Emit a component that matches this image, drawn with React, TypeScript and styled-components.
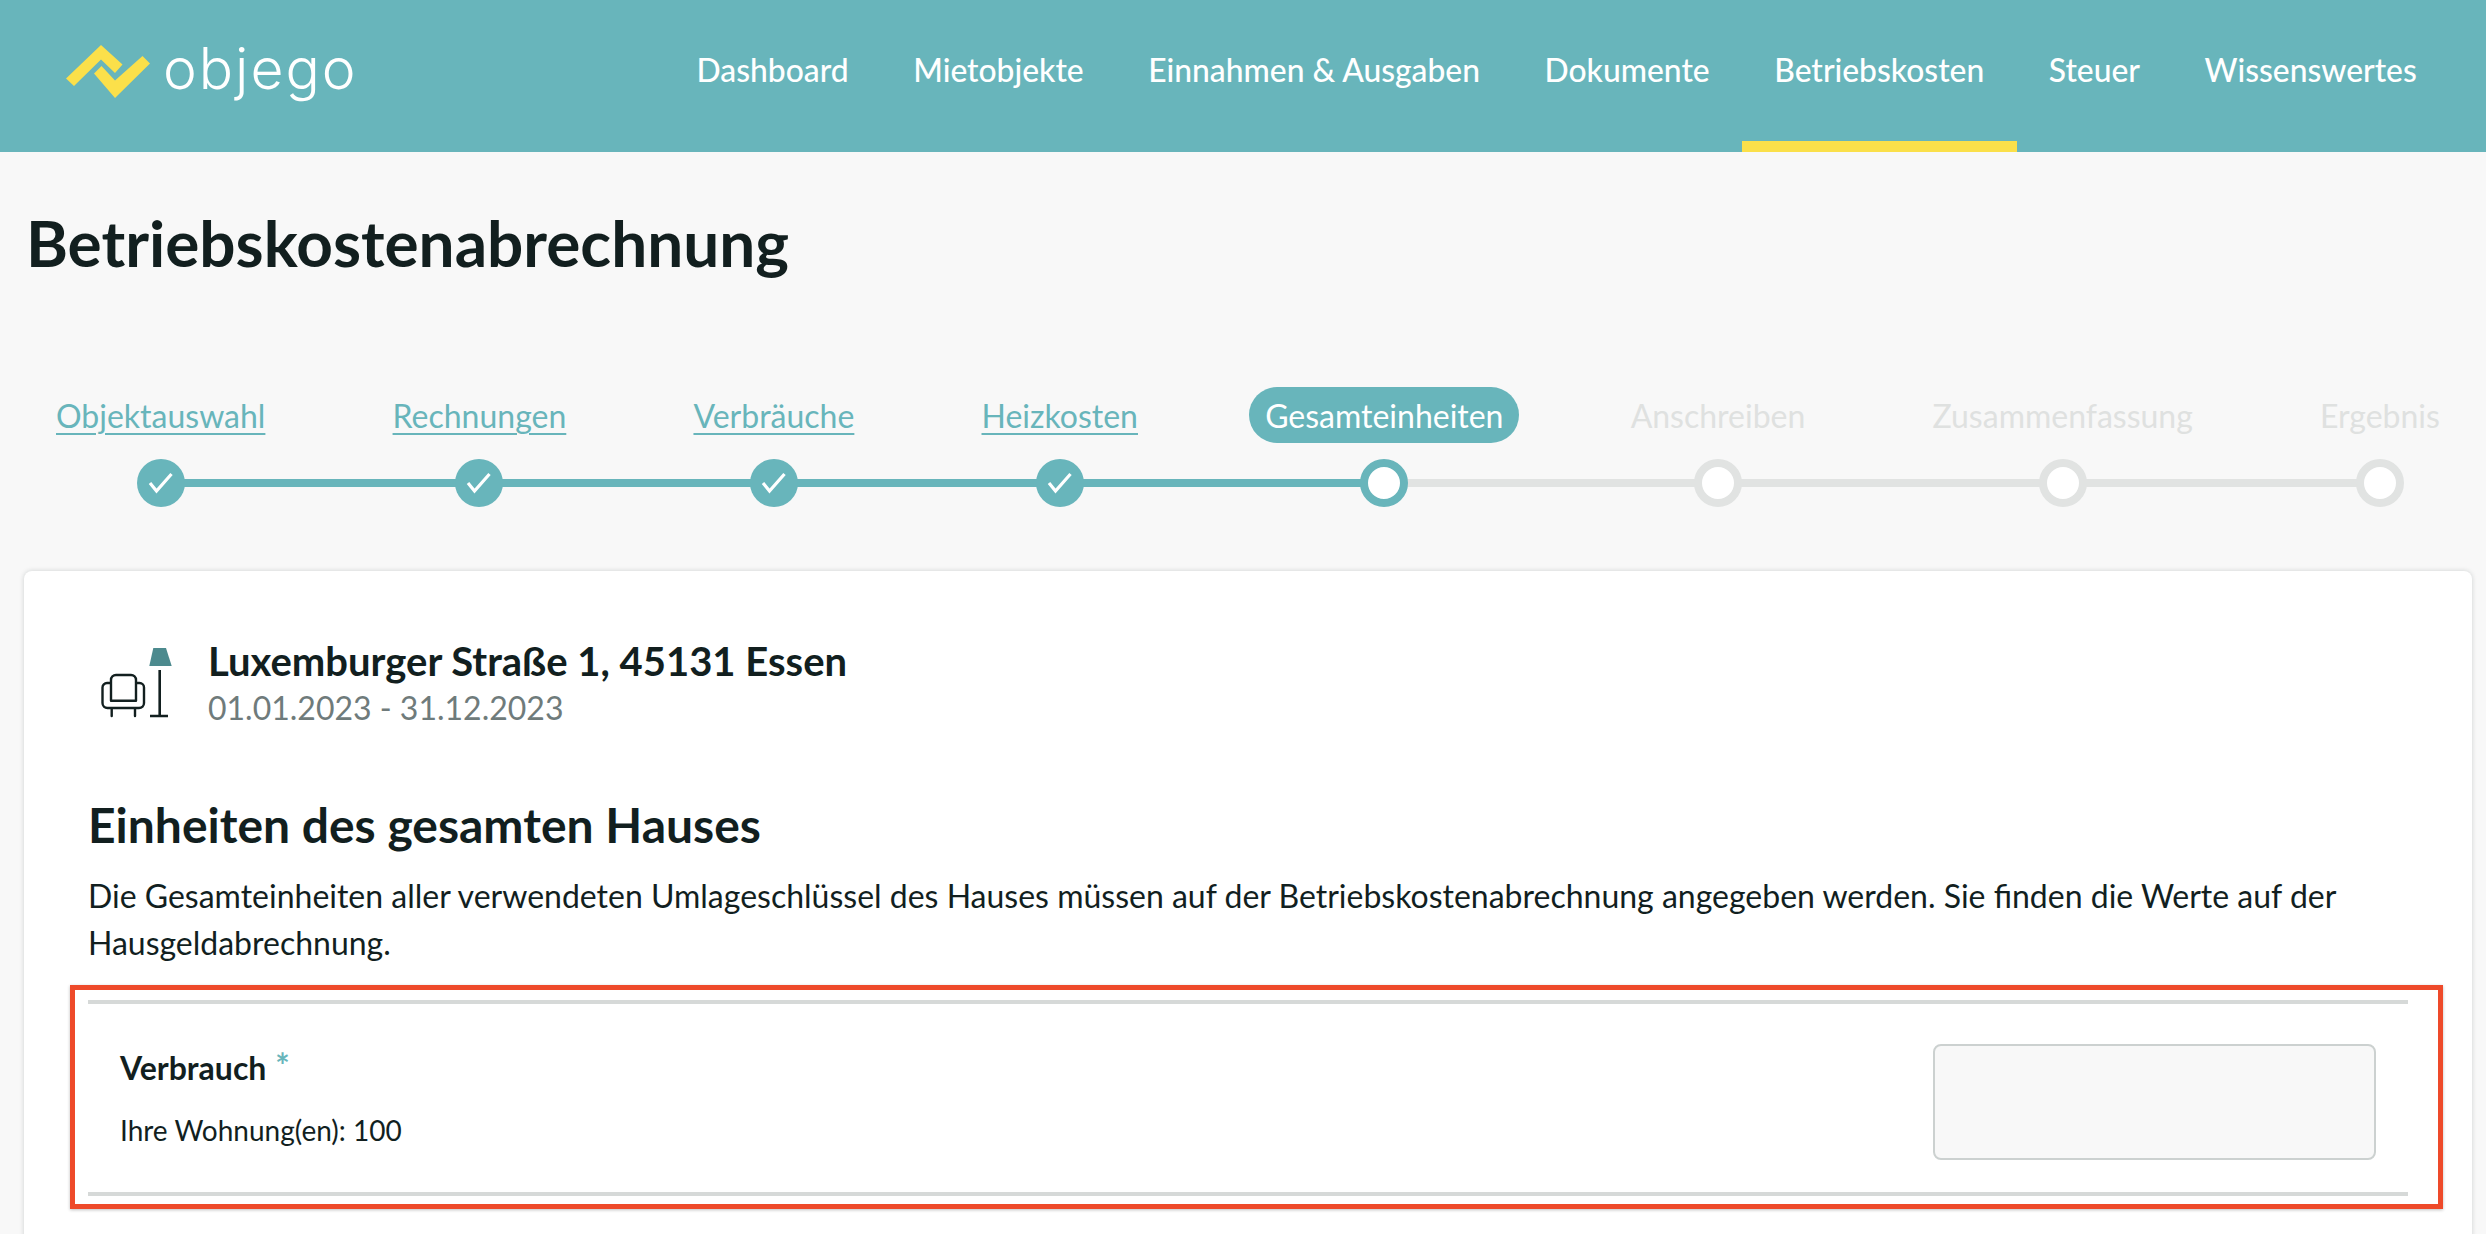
import React from "react";
import styled, { createGlobalStyle } from "styled-components";

const teal = "#68b5bb";
const ink = "#121f1f";

const Global = createGlobalStyle`
  html, body { margin: 0; padding: 0; height: 1234px; overflow: hidden; background: #f8f8f8; }
  body { font-family: Lato, "Liberation Sans", sans-serif; color: ${ink}; }
  * { box-sizing: border-box; }
`;

const Header = styled.header`
  height: 152px;
  background: ${teal};
  display: flex;
  align-items: stretch;
  justify-content: space-between;
  padding: 0 37px 0 66px;
`;
const Brand = styled.div`
  display: flex;
  align-items: center;
  gap: 13px;
  padding-bottom: 10px;
`;
const BrandName = styled.span`
  font-family: Inter, sans-serif;
  font-weight: 300;
  font-size: 57px;
  line-height: 1;
  letter-spacing: 2px;
  margin-bottom: 6px;
  color: #fff;
`;
const Nav = styled.nav`
  display: flex;
  align-items: stretch;
`;
const NavItem = styled.a<{ $active?: boolean }>`
  display: flex;
  align-items: center;
  padding: 11px 32.3px 13px;
  font-size: 31.8px;
  font-weight: 500;
  color: #fff;
  border-bottom: 11px solid ${(p) => (p.$active ? "#fbe04a" : "transparent")};
`;
const Title = styled.h1`
  margin: 0;
  padding: 48px 0 0 26px;
  font-size: 63.9px;
  line-height: 86px;
  font-weight: 700;
`;
const Stepper = styled.ol`
  position: relative;
  list-style: none;
  margin: 101px 0 0;
  padding: 0 46px 0 56px;
  height: 127px;
  display: flex;
  justify-content: space-between;
`;
const Track = styled.div`
  position: absolute;
  left: 161px;
  right: 106px;
  top: 92px;
  height: 8px;
  background: #e1e3e2;
`;
const TrackFill = styled.div`
  height: 100%;
  background: ${teal};
`;
const Step = styled.li<{ $current?: boolean }>`
  position: relative;
  display: flex;
  flex-direction: column;
  align-items: center;
  margin: 0 ${(p) => (p.$current ? "-16px" : "0")};
`;
const StepLabel = styled.a<{ $state: "done" | "current" | "todo" }>`
  height: 56px;
  display: flex;
  align-items: center;
  font-size: 32px;
  padding: 0 ${(p) => (p.$state === "current" ? "16px" : "0")};
  border-radius: 28px;
  white-space: nowrap;
  color: ${(p) => (p.$state === "done" ? teal : p.$state === "current" ? "#fff" : "#dfe1e0")};
  background: ${(p) => (p.$state === "current" ? teal : "transparent")};
  text-decoration: ${(p) => (p.$state === "done" ? "underline" : "none")};
  text-underline-offset: 5px;
  text-decoration-thickness: 2px;
`;
const Dot = styled.span<{ $state: "done" | "current" | "todo" }>`
  width: 48px;
  height: 48px;
  margin-top: 16px;
  border-radius: 50%;
  display: flex;
  align-items: center;
  justify-content: center;
  background: ${(p) => (p.$state === "done" ? teal : "#fff")};
  border: ${(p) => (p.$state === "done" ? "0" : `8px solid ${p.$state === "current" ? teal : "#e1e3e2"}`)};
`;
const Card = styled.main`
  margin: 57px 14px 0 24px;
  height: 710px;
  background: #fff;
  border-radius: 8px 8px 0 0;
  box-shadow: 0 0 5px rgba(18, 31, 31, 0.18);
  padding: 64px 29px 0 46px;
`;
const ObjectHead = styled.div`
  display: flex;
  align-items: flex-start;
  gap: 35px;
  padding-left: 31px;
`;
const ObjectIconSlot = styled.div`
  padding-top: 13px;
  flex: none;
`;
const ObjectText = styled.div`
  display: flex;
  flex-direction: column;
`;
const ObjectName = styled.div`
  font-size: 40px;
  line-height: 52px;
  font-weight: 700;
`;
const ObjectDates = styled.div`
  font-size: 32px;
  line-height: 42px;
  color: #6f7b7b;
`;
const Heading = styled.h2`
  margin: 65px 0 0 0;
  padding-left: 18px;
  font-size: 48px;
  line-height: 62px;
  font-weight: 700;
`;
const Intro = styled.p`
  margin: 16px 0 0;
  padding-left: 18px;
  font-size: 32px;
  line-height: 47px;
  max-width: 2360px;
`;
const Frame = styled.section`
  margin-top: 19px;
  border: 5px solid #ee4a2a;
  box-shadow: 0 1px 3px rgba(0, 0, 0, 0.25);
  padding: 10px 30px 8px 13px;
`;
const Rule = styled.hr`
  margin: 0;
  height: 4px;
  border: 0;
  background: #d6d9d8;
`;
const FieldRow = styled.div`
  height: 188px;
  display: flex;
  align-items: center;
  justify-content: space-between;
  padding: 8px 32px 0;
`;
const FieldText = styled.div`
  display: flex;
  flex-direction: column;
  gap: 24px;
  padding-bottom: 9px;
`;
const FieldLabel = styled.label`
  font-size: 32px;
  line-height: 40px;
  font-weight: 700;
`;
const Star = styled.span`
  color: ${teal};
  font-weight: 700;
  font-size: 34px;
  line-height: 0;
  vertical-align: 2px;
  margin-left: 9px;
`;
const FieldHint = styled.div`
  font-size: 28px;
  line-height: 36px;
`;
const Input = styled.input`
  width: 443px;
  height: 116px;
  background: #f8f8f8;
  border: 2px solid #ccd1d0;
  border-radius: 8px;
`;

const Logo = () => (
  <svg width="84" height="53" viewBox="0 0 84 53" aria-hidden>
    <path
      fill="#fbe04a"
      d="M0 33.500 35 0 56.500 19.500 49 28 35 14.500 8 41ZM28 28.500 35.500 21 49 35.500 76.500 11 84 18.500 49 53Z"
    />
  </svg>
);

const Check = () => (
  <svg width="26" height="22" viewBox="0 0 26 22" aria-hidden>
    <path d="M2 11 8.500 19 23.500 2" fill="none" stroke="#fff" strokeWidth="3.200" />
  </svg>
);

const ObjectIcon = () => (
  <svg width="72" height="70" viewBox="0 0 72 70" aria-hidden>
    <path fill="#4c8a8e" d="M52.300 0H65l5.700 18H48.300Z" />
    <path d="M58.700 22V68M49 68H67" fill="none" stroke={ink} strokeWidth="2.600" />
    <path
      d="M10 52.700V32a5 5 0 0 1 5-5h15a5 5 0 0 1 5 5v20.700ZM10 35H6a4.500 4.500 0 0 0-4.500 4.500V55a5 5 0 0 0 5 5H38a5 5 0 0 0 5-5V39.500A4.500 4.500 0 0 0 38.500 35H35M10.700 60V68M34 60V68"
      fill="none"
      stroke={ink}
      strokeWidth="2.400"
      strokeLinecap="round"
      strokeLinejoin="round"
    />
  </svg>
);

const navItems = ["Dashboard", "Mietobjekte", "Einnahmen & Ausgaben", "Dokumente", "Betriebskosten", "Steuer", "Wissenswertes"];
const steps = ["Objektauswahl", "Rechnungen", "Verbräuche", "Heizkosten", "Gesamteinheiten", "Anschreiben", "Zusammenfassung", "Ergebnis"];
const currentStep = 4;

export default function App() {
  return (
    <>
      <Global />
      <Header>
        <Brand>
          <Logo />
          <BrandName>objego</BrandName>
        </Brand>
        <Nav>
          {navItems.map((n) => (
            <NavItem key={n} $active={n === "Betriebskosten"}>{n}</NavItem>
          ))}
        </Nav>
      </Header>
      <Title>Betriebskostenabrechnung</Title>
      <Stepper>
        <Track>
          <TrackFill style={{ width: `${((1384 - 161) / (2380 - 161)) * 100}%` }} />
        </Track>
        {steps.map((s, i) => {
          const state = i < currentStep ? "done" : i === currentStep ? "current" : "todo";
          return (
            <Step key={s} $current={state === "current"}>
              <StepLabel $state={state}>{s}</StepLabel>
              <Dot $state={state}>{state === "done" && <Check />}</Dot>
            </Step>
          );
        })}
      </Stepper>
      <Card>
        <ObjectHead>
          <ObjectIconSlot>
            <ObjectIcon />
          </ObjectIconSlot>
          <ObjectText>
            <ObjectName>Luxemburger Straße 1, 45131 Essen</ObjectName>
            <ObjectDates>01.01.2023 - 31.12.2023</ObjectDates>
          </ObjectText>
        </ObjectHead>
        <Heading>Einheiten des gesamten Hauses</Heading>
        <Intro>
          Die Gesamteinheiten aller verwendeten Umlageschlüssel des Hauses müssen auf der Betriebskostenabrechnung angegeben werden. Sie finden die Werte auf der Hausgeldabrechnung.
        </Intro>
        <Frame>
          <Rule />
          <FieldRow>
            <FieldText>
              <FieldLabel>Verbrauch<Star>*</Star></FieldLabel>
              <FieldHint>Ihre Wohnung(en): 100</FieldHint>
            </FieldText>
            <Input aria-label="Verbrauch" />
          </FieldRow>
          <Rule />
        </Frame>
      </Card>
    </>
  );
}
